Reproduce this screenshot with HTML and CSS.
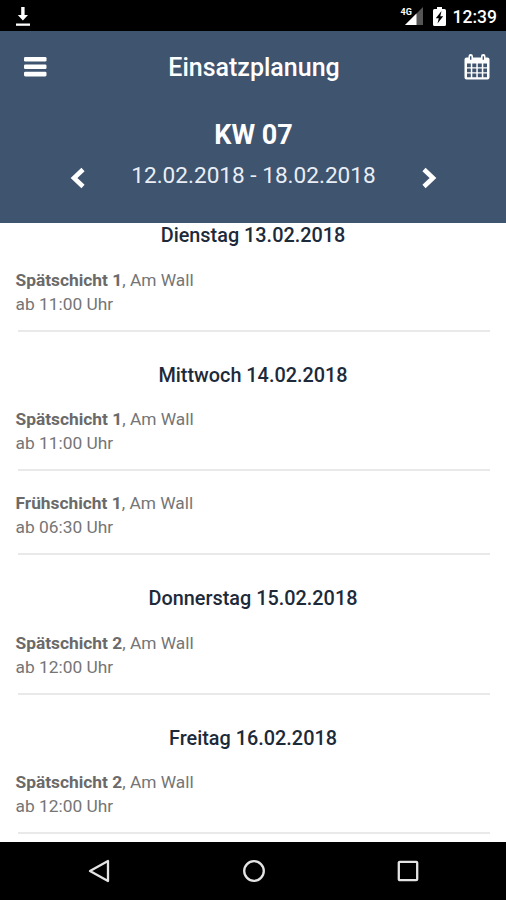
FILE: index.html
```html
<!DOCTYPE html>
<html lang="de">
<head>
  <meta charset="UTF-8" />
  <meta name="viewport" content="width=device-width, initial-scale=1.0"/>
  <title>Einsatzplanung</title>

  <link rel="stylesheet" href="styles.css">
</head>
<body>
  <div class="statusbar">
    <svg class="download" width="16" height="20" viewBox="0 0 16 20">
      <path d="M6.2 0h3.4v8H13l-5.100 5.600L2.800 8h3.400z"/>
      <path d="M1 16.500h14v2.300H1z"/>
    </svg>
    <div class="status-right">
      <div class="signal">
        <span class="net">4G</span>
        <svg width="18" height="18" viewBox="0 0 18 18">
          <path fill="#555" d="M18 0v18H0z"/>
          <path d="M11.500 6.500V18H0z"/>
        </svg>
      </div>
      <svg class="battery" width="13" height="19" viewBox="0 0 13 19">
        <path d="M4 0h5v2h2.500Q13 2 13 3.500v14q0 1.500-1.500 1.500h-10Q0 19 0 17.500v-14Q0 2 1.500 2H4z"/>
        <path fill="#000" d="M8.500 4 2.800 11.300h3L4.500 16.500l5.700-7.300H7.300z"/>
      </svg>
      <span class="clock">12:39</span>
    </div>
  </div>

  <header>
    <div class="topbar">
      <button class="menu" aria-label="Menü">
        <svg width="23" height="20" viewBox="0 0 23 20">
          <rect y="0" width="22.500" height="4.600" rx="1.300"/>
          <rect y="7.400" width="22.500" height="4.600" rx="1.300"/>
          <rect y="14.800" width="22.500" height="4.600" rx="1.300"/>
        </svg>
      </button>
      <h1>Einsatzplanung</h1>
      <button class="calendar" aria-label="Kalender">
        <svg width="26" height="26" viewBox="0 0 26 26">
          <path fill-rule="evenodd" d="M2.500 3.500h2V2.300q0-2.300 2.200-2.300t2.300 2.300v1.200h8V2.300Q17 0 19.300 0t2.200 2.300v1.200h2Q25.500 3.500 25.500 5.500v18q0 2-2 2h-21q-2 0-2-2v-18q0-2 2-2zM6 2.300v3.400h1.400V2.300zM18.600 2.300v3.400H20V2.300zM3 9.500v3.700h3.800V9.500zM8.300 9.500v3.700h4V9.500zM13.800 9.500v3.700h4V9.500zM19.300 9.500v3.700H23V9.500zM3 14.500v3.700h3.800v-3.700zM8.300 14.500v3.700h4v-3.700zM13.800 14.500v3.700h4v-3.700zM19.300 14.500v3.700H23v-3.700zM3 19.500v3.700h3.800v-3.700zM8.300 19.500v3.700h4v-3.700zM13.800 19.500v3.700h4v-3.700zM19.300 19.500v3.700H23v-3.700z"/>
        </svg>
      </button>
    </div>
    <div class="week">
      <button aria-label="Vorherige Woche">
        <svg width="16" height="22" viewBox="0 0 16 22"><path class="arrow" d="M13 2.500 4 11l9 8.500"/></svg>
      </button>
      <div class="week-text">
        <h2>KW 07</h2>
        <p>12.02.2018 - 18.02.2018</p>
      </div>
      <button aria-label="Nächste Woche">
        <svg width="16" height="22" viewBox="0 0 16 22"><path class="arrow" d="M3 2.500 12 11l-9 8.500"/></svg>
      </button>
    </div>
  </header>

  <main>
    <h3>Dienstag 13.02.2018</h3>
    <div class="shift">
      <p><b>Spätschicht 1</b>, Am Wall</p>
      <p>ab 11:00 Uhr</p>
    </div>

    <h3>Mittwoch 14.02.2018</h3>
    <div class="shift">
      <p><b>Spätschicht 1</b>, Am Wall</p>
      <p>ab 11:00 Uhr</p>
    </div>
    <div class="shift">
      <p><b>Frühschicht 1</b>, Am Wall</p>
      <p>ab 06:30 Uhr</p>
    </div>

    <h3>Donnerstag 15.02.2018</h3>
    <div class="shift">
      <p><b>Spätschicht 2</b>, Am Wall</p>
      <p>ab 12:00 Uhr</p>
    </div>

    <h3>Freitag 16.02.2018</h3>
    <div class="shift">
      <p><b>Spätschicht 2</b>, Am Wall</p>
      <p>ab 12:00 Uhr</p>
    </div>
  </main>

  <nav>
    <svg width="24" height="24" viewBox="0 0 24 24"><path d="M21 2v20L3 12z"/></svg>
    <svg width="24" height="24" viewBox="0 0 24 24"><circle cx="12" cy="12" r="9.800"/></svg>
    <svg width="24" height="24" viewBox="0 0 24 24"><rect x="2.800" y="2.800" width="18.400" height="18.400" rx="1"/></svg>
  </nav>
</body>
</html>
```
FILE: styles.css
```css
* {
  box-sizing: border-box;
  margin: 0;
  padding: 0;
}

body {
  font-family: Roboto, "Liberation Sans", sans-serif;
  background: #fff;
  height: 900px;
  overflow: hidden;
  display: flex;
  flex-direction: column;
}

svg {
  display: block;
  fill: #fff;
}

button {
  background: none;
  border: none;
  cursor: pointer;
}

.statusbar {
  height: 31px;
  background: #000;
  color: #fff;
  display: flex;
  justify-content: space-between;
  padding: 7px 9px 0 15px;
}

.status-right {
  display: flex;
}

.signal {
  position: relative;
  margin-right: 10px;
}

.net {
  position: absolute;
  left: -4px;
  top: 0;
  font-size: 9px;
  line-height: 10px;
  font-weight: bold;
}

.battery {
  margin-right: 7px;
}

.clock {
  font-size: 17.5px;
  line-height: 20px;
  font-weight: 500;
}

header {
  height: 192px;
  background: #3f546f;
  color: #fff;
}

.topbar {
  height: 72px;
  padding: 0 16px 0 24px;
  display: flex;
  align-items: center;
  justify-content: space-between;
}

h1 {
  font-size: 25px;
  font-weight: 500;
  margin-right: 3px;
}

.week {
  display: flex;
  justify-content: space-between;
  padding: 14px 69px 0 70px;
}

.week button {
  padding-top: 50px;
  height: 72px;
}

.arrow {
  fill: none;
  stroke: #fff;
  stroke-width: 4.6;
}

.week-text {
  text-align: center;
}

h2 {
  font-size: 27px;
  line-height: 36px;
  font-weight: bold;
}

.week-text p {
  font-size: 22.6px;
  line-height: 32px;
  margin-top: 7px;
  color: #e9eef6;
}

main {
  height: 619px;
  overflow: hidden;
  padding: 1px 16px 0 18px;
}

h3 {
  padding-top: 32px;
  margin-right: 2px;
  font-size: 19.85px;
  line-height: 23.8px;
  font-weight: 500;
  color: #1d2a3a;
  text-align: center;
}

h3:first-child {
  padding-top: 0;
}

.shift {
  height: 83.8px;
  padding-top: 21px;
  border-bottom: 2px solid #e9e9e9;
  font-size: 17.35px;
  line-height: 23.8px;
  color: #757575;
}

.shift p {
  margin-left: -2.5px;
}

.shift b {
  font-weight: bold;
  color: #6a6a6a;
}

nav {
  height: 58px;
  background: #000;
  display: flex;
  justify-content: space-between;
  align-items: center;
  padding: 0 86px 0 87px;
}

nav svg {
  fill: none;
  stroke: #e4e4e4;
  stroke-width: 2.3;
  stroke-linejoin: round;
}
```
